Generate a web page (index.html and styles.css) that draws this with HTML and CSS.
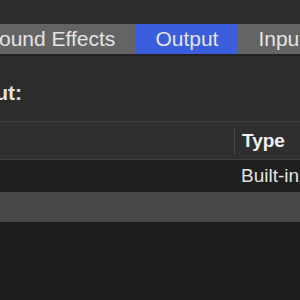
FILE: index.html
```html
<!DOCTYPE html>
<html lang="en">
<head>
    <meta charset="UTF-8">
    <meta name="viewport" content="width=device-width, initial-scale=1.0">
    <title>Sound</title>
    <link rel="stylesheet" href="styles.css">
</head>
<body>
    <!-- Tab control -->
    <div class="tabs">
        <div class="tab first">Sound Effects</div>
        <div class="tab active">Output</div>
        <div class="tab">Input</div>
    </div>

    <div class="section-label"><span>Select a device for sound output:</span></div>

    <!-- Device table -->
    <div class="device-table">
        <div class="table-head">
            <div class="col-name"></div>
            <div class="col-type">Type</div>
        </div>
        <div class="table-row">
            <div class="col-name"></div>
            <div class="col-type">Built-in</div>
        </div>
        <div class="table-row alt">
            <div class="col-name"></div>
            <div class="col-type"></div>
        </div>
    </div>
</body>
</html>
```

FILE: styles.css
```css
body {
    font-family: 'Liberation Sans', Arial, sans-serif;
    background-color: #2c2c2c;
    margin: 0;
    padding: 0;
    width: 300px;
    height: 300px;
    overflow: hidden;
    color: #e2e2e2;
}
.tabs {
    display: flex;
    margin-top: 24px;
    height: 30px;
    background-color: #646464;
    border-bottom: 2px solid #232323;
    white-space: nowrap;
}
.tab {
    padding: 0 20px;
    font-size: 21px;
    line-height: 30px;
    color: #e4e4e4;
    flex-shrink: 0;
}
.tab.first {
    margin-left: -35px;
}
.tab.active {
    background-color: #3a5ddb;
}
/* label is cut off by the window edge, only its end shows */
.section-label {
    display: flex;
    justify-content: flex-end;
    width: 22px;
    margin-top: 25px;
    font-size: 21px;
    font-weight: bold;
    line-height: 24px;
    white-space: nowrap;
}
.section-label span {
    flex-shrink: 0;
}
.device-table {
    margin-top: 16px;
    border-top: 1px solid #3e3e3e;
    background-color: #1e1e1e;
    height: 178px;
}
.table-head {
    display: flex;
    height: 37px;
    background-color: #2f2f2f;
    border-bottom: 1px solid #3f3f3f;
    align-items: center;
}
.table-row {
    display: flex;
    height: 32px;
    align-items: center;
    background-color: #1f1f1f;
    font-size: 19px;
    white-space: nowrap;
}
.table-row.alt {
    height: 30px;
    background-color: #474747;
}
.col-name {
    width: 234px;
    flex-shrink: 0;
}
.col-type {
    padding-left: 7px;
}
.table-head .col-name {
    height: 26px;
    border-right: 1px solid #4a4a4a;
}
.table-head .col-type {
    font-size: 19px;
    font-weight: bold;
    color: #f0f0f0;
}
```
